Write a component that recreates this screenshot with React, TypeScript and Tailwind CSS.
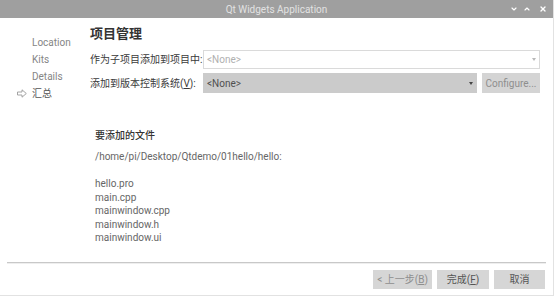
import { ChevronDown, ChevronUp, X } from "lucide-react";

const files = ["hello.pro", "main.cpp", "mainwindow.cpp", "mainwindow.h", "mainwindow.ui"];

function NavItem({ label, current }: { label: string; current?: boolean }) {
  return (
    <div className="flex h-[17px] items-center">
      <span className="flex w-[15px] items-center">
        {current && (
          <svg width="10" height="9" viewBox="0 0 10 9" fill="none" stroke="#9a9a9a" strokeWidth="0.9">
            <path d="M0.5 3 H5 V0.8 L9.3 4.5 L5 8.2 V6 H0.5 Z" strokeLinejoin="round" />
          </svg>
        )}
      </span>
      <span className={current ? "text-[#555]" : "text-[#858585]"}>{label}</span>
    </div>
  );
}

function Caret({ color }: { color: string }) {
  return (
    <svg width="4" height="3" viewBox="0 0 4 3">
      <path d="M0 0 H4 L2 3 Z" fill={color} />
    </svg>
  );
}

export default function App() {
  return (
    <main className="flex h-[296px] w-[554px] flex-col overflow-hidden border-b border-r border-[#e2e2e2] bg-white font-[Roboto,'Noto_Sans_CJK_SC',sans-serif] text-[10px] text-[#555]">
      <header className="relative flex h-[18px] shrink-0 items-center justify-center bg-[#9f9f9f]">
        <span className="text-[10px] text-[#e2e2e2]">Qt Widgets Application</span>
        <div className="absolute right-[6px] top-0 flex h-[18px] items-center gap-[5px] text-white">
          <ChevronDown className="h-[8px] w-[8px]" strokeWidth={3.5} />
          <ChevronUp className="h-[8px] w-[8px]" strokeWidth={3.5} />
          <X className="ml-[3px] h-[8px] w-[8px]" strokeWidth={4} />
        </div>
      </header>

      <div className="flex flex-1">
        <nav className="w-[90px] shrink-0 pl-[17px] pt-[16px]">
          <NavItem label="Location" />
          <NavItem label="Kits" />
          <NavItem label="Details" />
          <NavItem label="汇总" current />
        </nav>

        <section className="flex flex-1 flex-col pr-[13px] pt-[8px]">
          <h1 className="h-[16px] text-[13px] font-bold leading-[16px] text-[#333]">项目管理</h1>

          <div className="mt-[8px] flex flex-col gap-[4px]">
            <div className="flex h-[19px] items-center">
              <span className="w-[113px] shrink-0 text-[#3a3a3a]">作为子项目添加到项目中:</span>
              <div className="flex h-full flex-1 items-center justify-between border border-[#dadada] bg-white pl-[3px] pr-[3px] text-[#b0b0b0]">
                <span>&lt;None&gt;</span>
                <Caret color="#b8b8b8" />
              </div>
            </div>
            <div className="flex h-[20px] items-center">
              <span className="w-[113px] shrink-0 text-[#3a3a3a]">
                添加到版本控制系统(<span className="underline">V</span>):
              </span>
              <div className="flex h-full flex-1 items-center justify-between bg-[#cbcbcb] pl-[4px] pr-[4px] text-[#505050]">
                <span>&lt;None&gt;</span>
                <Caret color="#444" />
              </div>
              <button className="ml-[5px] flex h-full w-[58px] items-center justify-center bg-[#d4d4d4] text-[#8e8e8e]">
                Configure...
              </button>
            </div>
          </div>

          <div className="ml-[5px] mt-[36px]">
            <p className="text-[10px] font-medium leading-[14px] text-[#333]">要添加的文件</p>
            <div className="mt-[7px] leading-[13.5px] text-[#666]">
              <p>/home/pi/Desktop/Qtdemo/01hello/hello:</p>
              <p>&nbsp;</p>
              {files.map((f) => (
                <p key={f}>{f}</p>
              ))}
            </div>
          </div>
        </section>
      </div>

      <footer className="shrink-0 px-[7px] pb-[6px]">
        <div className="h-[2px] border-t border-[#c8c8c8] bg-[#eeeeee]" />
        <div className="mt-[6px] flex justify-end gap-[5px] pr-[1px]">
          <button className="flex h-[19px] w-[59px] items-center justify-center bg-[#d6d6d6] text-[#8e8e8e]">
            &lt; 上一步(<span className="underline">B</span>)
          </button>
          <button className="flex h-[19px] w-[52px] items-center justify-center bg-[#d6d6d6] text-[#555]">
            完成(<span className="underline">F</span>)
          </button>
          <button className="flex h-[19px] w-[51px] items-center justify-center bg-[#d6d6d6] text-[#555]">
            取消
          </button>
        </div>
      </footer>
    </main>
  );
}
